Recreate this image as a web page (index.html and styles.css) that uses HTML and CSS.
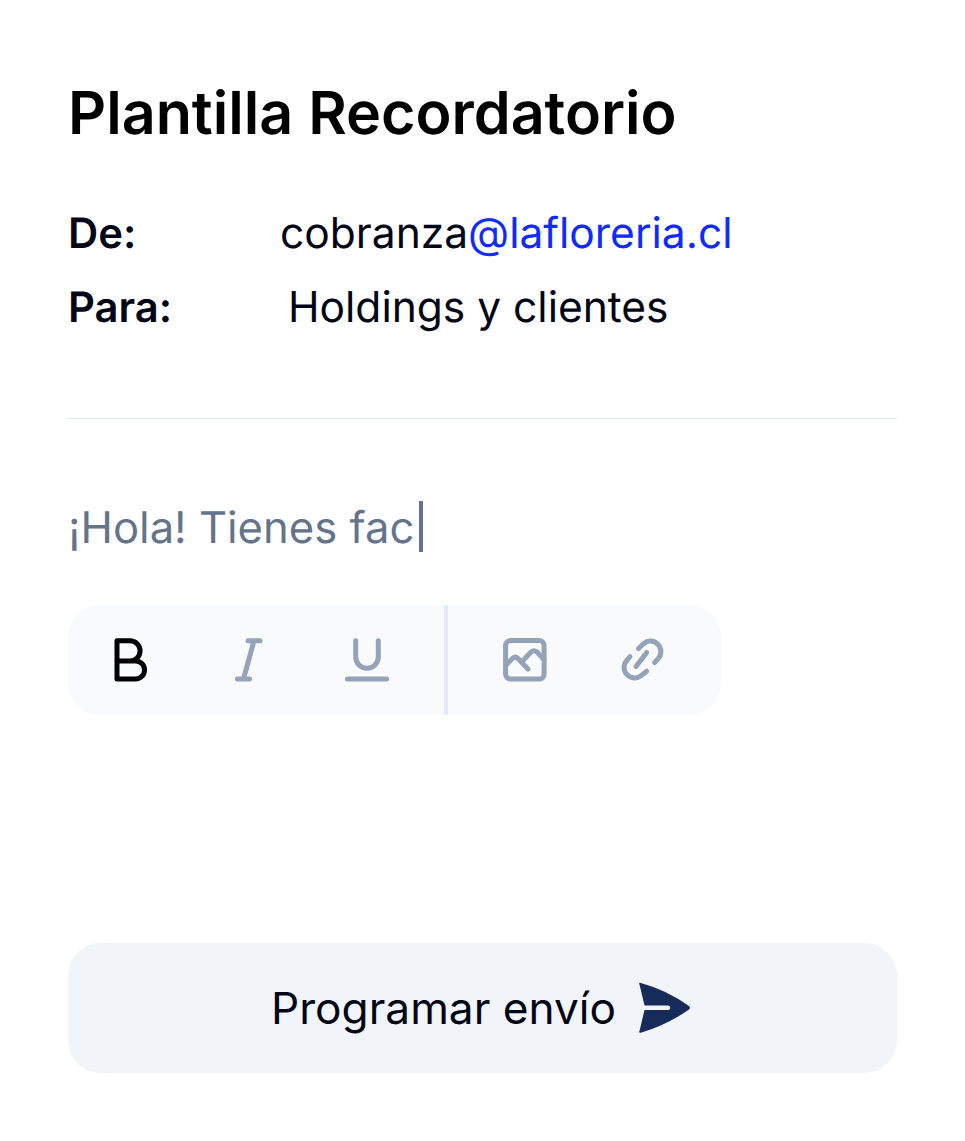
FILE: index.html
```html
<!DOCTYPE html>
<html lang="es">
<head>
<meta charset="utf-8">
<title>Plantilla Recordatorio</title>
<link rel="stylesheet" href="styles.css">
</head>
<body>
<main class="card">
  <h1 class="title">Plantilla Recordatorio</h1>
  <dl class="meta">
    <div class="meta-row">
      <dt class="meta-label">De:</dt>
      <dd class="meta-value">cobranza<a class="mail" href="#">@lafloreria.cl</a></dd>
    </div>
    <div class="meta-row">
      <dt class="meta-label">Para:</dt>
      <dd class="meta-value meta-value-to">Holdings y clientes</dd>
    </div>
  </dl>
  <hr class="rule">
  <p class="body-text">¡Hola! Tienes fac<span class="caret"></span></p>
  <div class="toolbar">
    <svg class="icon icon-on" viewBox="0 0 48 48"><path d="M11 4.7H24a10.1 10.1 0 0 1 0 20.2H11ZM11 24.9H29.500a9 9 0 0 1 0 18.1H11Z"/></svg>
    <svg class="icon" viewBox="0 0 48 48"><path d="M23 4.7H35M12.500 43H24.500M29 4.7 18.500 43"/></svg>
    <svg class="icon" viewBox="0 0 48 48"><path d="M12.700 4.7V21a11.300 11.300 0 0 0 22.600 0V4.700M4.500 43H43.500"/></svg>
    <span class="divider"></span>
    <svg class="icon" viewBox="0 0 48 48"><rect x="4.6" y="4.6" width="38.5" height="38.5" rx="5"/><path d="M6 28 12 22Q14.500 20 17 22.500L27 33M22.500 24 30 16Q33 13.500 36 16L43 23.500"/></svg>
    <svg class="icon" viewBox="0 0 48 48"><path d="M19.500 12.500 24.600 7.600A10.500 10.500 0 0 1 39.400 22.400L35.500 26.500M27.700 16.500 17 30.500M11 20.700 7.600 24.600A10.500 10.500 0 0 0 22.400 39.400L27.700 35.200"/></svg>
  </div>
  <button class="submit" type="button">
    <span>Programar envío</span>
    <svg class="send" viewBox="0 0 54 54"><path d="M2.500 3.500Q1.500 1.500 3.800 1.900 30 9 52 25Q53.800 26.700 52 28.500 30 44 3.800 51.700 1.500 52 2.500 50L7.500 29H31a2.200 2.200 0 0 0 0-4.500H7.500Z"/></svg>
  </button>
</main>
</body>
</html>
```

FILE: styles.css
```css
* { box-sizing: border-box; }

html, body {
  margin: 0;
  background: #fff;
}

body {
  font-family: Inter, "Liberation Sans", sans-serif;
  color: #020617;
  text-rendering: geometricPrecision;
}

.card {
  width: 965px;
  height: 1141px;
  padding: 79px 68px 0;
}

.title {
  margin: 0;
  font-size: 59.200px;
  line-height: 70px;
  font-weight: 600;
  color: #000;
}

.meta {
  margin: 60px 0 0;
}

.meta-row {
  display: flex;
  height: 74px;
  font-size: 42.500px;
  line-height: 50px;
}

.meta-label {
  width: 212px;
  font-size: 41.800px;
  font-weight: 600;
}

.meta-value {
  margin: 0;
}

.meta-value-to {
  padding-left: 8px;
}

.mail {
  color: #0f2bff;
  text-decoration: none;
}

.rule {
  margin: 61px 0 0;
  border: 0;
  border-top: 1px solid #e2e8f0;
}

.body-text {
  display: flex;
  align-items: center;
  height: 52px;
  margin: 82px 0 0;
  padding-top: 2px;
  font-size: 43.600px;
  line-height: 54px;
  color: #64748b;
}

.caret {
  width: 4px;
  height: 51px;
  margin: -4px 0 0 5px;
  background: #64748b;
}

.toolbar {
  display: flex;
  align-items: center;
  width: 653px;
  height: 110px;
  margin-top: 52px;
  padding-left: 38px;
  gap: 70.500px;
  border-radius: 32px;
  background: #f8fafc;
}

.icon {
  flex: none;
  width: 48px;
  height: 48px;
  fill: none;
  stroke: #94a3b8;
  stroke-width: 5;
  stroke-linecap: round;
  stroke-linejoin: round;
}

.icon-on {
  stroke: #000;
}

.divider {
  align-self: stretch;
  width: 4px;
  margin: 0 -18px 0 -17.500px;
  background: #e2ebf3;
}

.submit {
  display: flex;
  align-items: center;
  justify-content: center;
  gap: 21px;
  width: 829px;
  height: 130px;
  margin-top: 228px;
  padding: 0 3px 0 0;
  border: 0;
  border-radius: 32px;
  background: #f1f5f9;
  font: inherit;
  font-size: 44.200px;
  color: #020617;
}

.send {
  width: 54px;
  height: 54px;
  fill: #172b5b;
}
```
